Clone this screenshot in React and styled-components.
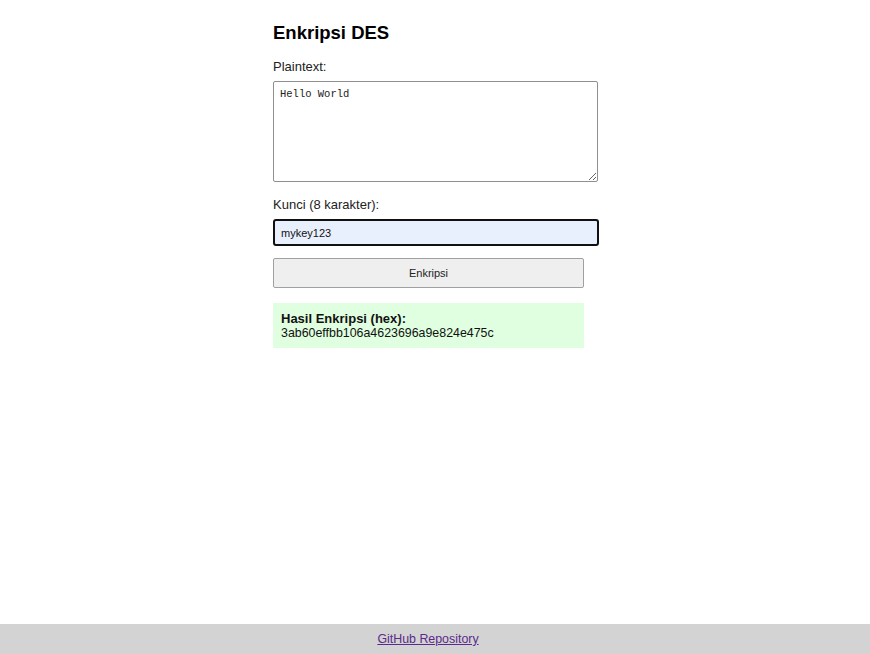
import React from 'react';
import styled, { createGlobalStyle } from 'styled-components';

const GlobalStyle = createGlobalStyle`
  html, body {
    margin: 0;
    padding: 0;
    background: #fff;
  }
  body {
    font-family: "Liberation Sans", Arial, sans-serif;
    color: #111;
  }
`;

const Page = styled.div`
  min-height: 100vh;
  display: flex;
  flex-direction: column;
`;

const Main = styled.main`
  flex: 1;
  width: 328px;
  margin: 0 auto;
  padding: 22px 0 0 2px;
  box-sizing: border-box;
`;

const Title = styled.h3`
  margin: 0 0 15px;
  font-size: 18.5px;
  font-weight: bold;
  color: #000;
  line-height: 22px;
`;

const Label = styled.label`
  display: block;
  font-size: 13px;
  line-height: 16px;
  color: #222;
  margin-bottom: 6px;
`;

const TextArea = styled.textarea`
  display: block;
  width: 325px;
  height: 101px;
  box-sizing: border-box;
  padding: 6px;
  font-family: "Liberation Mono", "DejaVu Sans Mono", monospace;
  font-size: 10.5px;
  border: 1px solid #8f8f8f;
  border-radius: 2px;
  resize: vertical;
  margin-bottom: 15px;
  color: #222;
`;

const Input = styled.input`
  display: block;
  width: 326px;
  height: 27px;
  box-sizing: border-box;
  padding: 0 6px;
  font-family: "Liberation Sans", Arial, sans-serif;
  font-size: 11px;
  background: #e8f0fe;
  border: 2px solid #101010;
  border-radius: 3px;
  outline: none;
  margin-bottom: 12px;
  color: #111;
`;

const Button = styled.button`
  display: block;
  width: 311px;
  height: 30px;
  box-sizing: border-box;
  background: #efefef;
  border: 1px solid #a0a0a0;
  border-radius: 2px;
  font-family: "Liberation Sans", Arial, sans-serif;
  font-size: 11px;
  color: #222;
  margin-bottom: 15px;
`;

const Result = styled.div`
  width: 311px;
  box-sizing: border-box;
  background: #e0ffe0;
  padding: 9px 8px 8px;
  font-size: 12.4px;
  line-height: 14px;
  color: #111;
`;

const ResultTitle = styled.strong`
  display: block;
  font-size: 13px;
`;

const Footer = styled.footer`
  height: 30px;
  background: #d3d3d3;
  display: flex;
  align-items: center;
  justify-content: center;
  padding-right: 14px;
`;

const RepoLink = styled.a`
  color: #5b2a8c;
  font-size: 12.4px;
  text-decoration: underline;
`;

export default function App() {
  return (
    <Page>
      <GlobalStyle />
      <Main>
        <Title>Enkripsi DES</Title>
        <Label htmlFor="plain">Plaintext:</Label>
        <TextArea id="plain" defaultValue="Hello World" />
        <Label htmlFor="key">Kunci (8 karakter):</Label>
        <Input id="key" defaultValue="mykey123" />
        <Button>Enkripsi</Button>
        <Result>
          <ResultTitle>Hasil Enkripsi (hex):</ResultTitle>
          3ab60effbb106a4623696a9e824e475c
        </Result>
      </Main>
      <Footer>
        <RepoLink href="#">GitHub Repository</RepoLink>
      </Footer>
    </Page>
  );
}
